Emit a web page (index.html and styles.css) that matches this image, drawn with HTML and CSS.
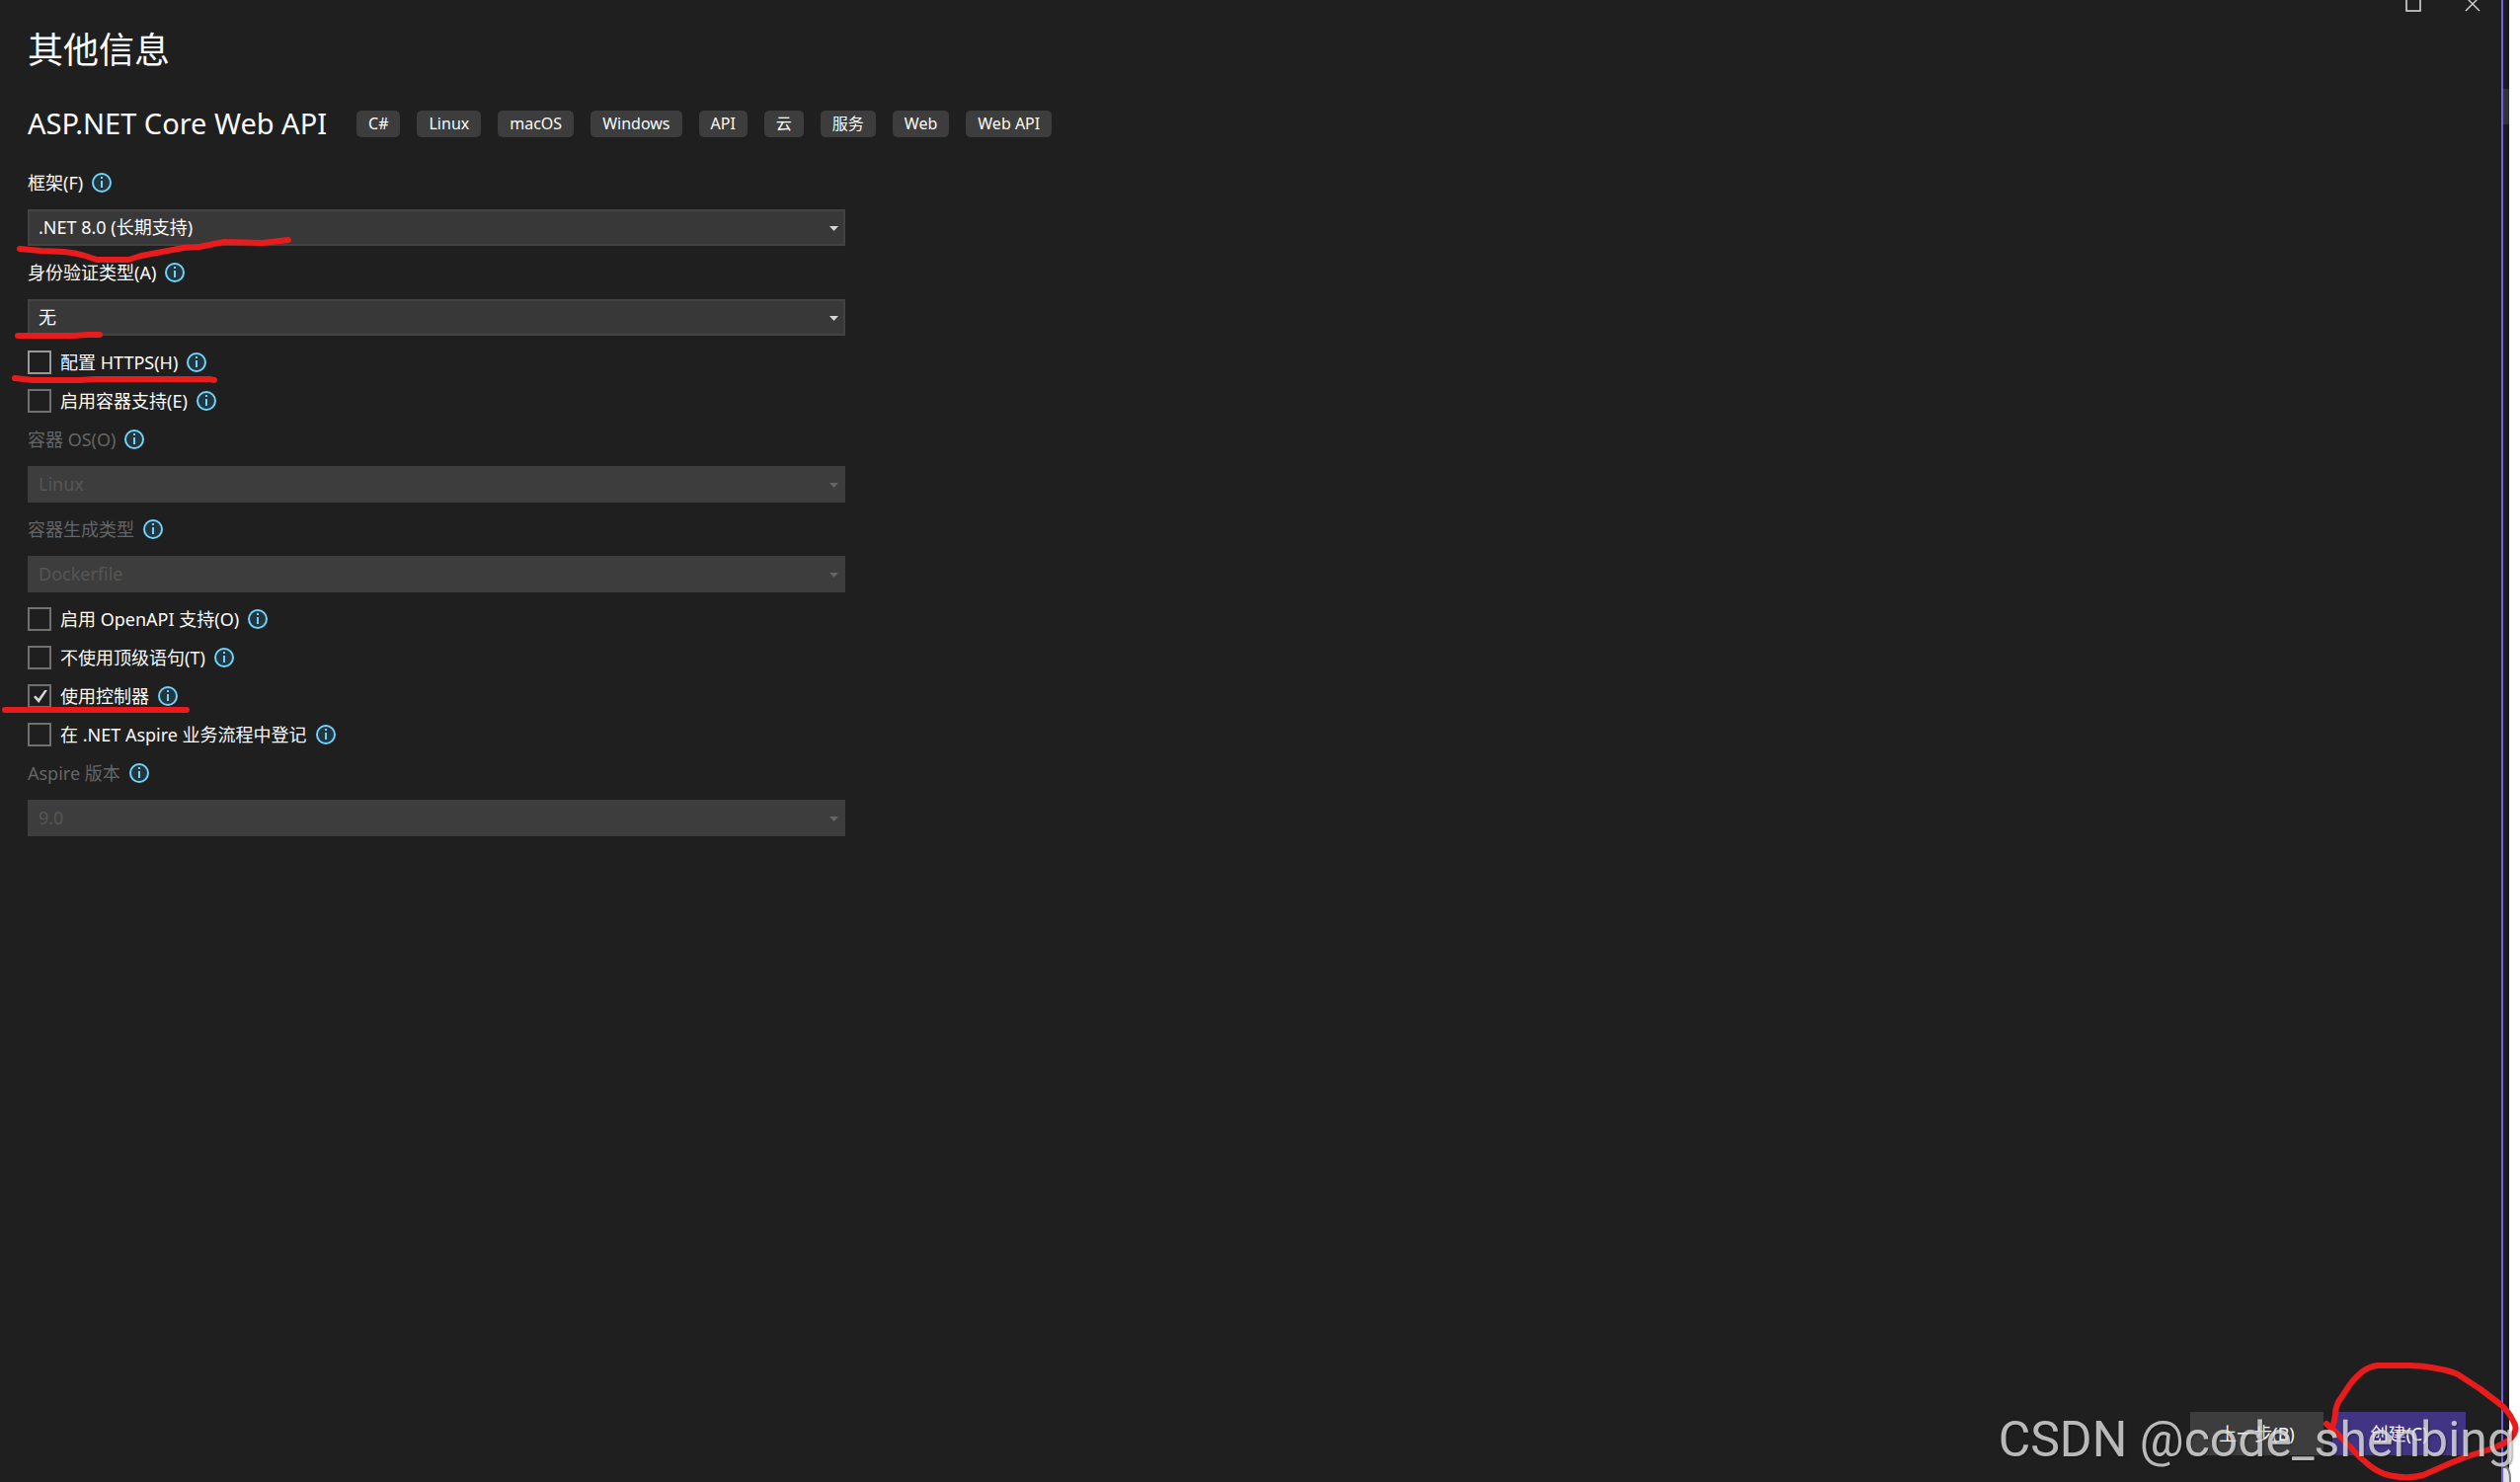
FILE: index.html
```
<!DOCTYPE html>
<html lang="zh-CN">
    <head>
        <meta charset="utf-8">
        <title>其他信息</title>
        <link rel="stylesheet" href="styles.css">
    </head>
    <body>
        <svg class="defs" width="0" height="0">
            <symbol id="info" viewBox="0 0 20 20">
                <circle cx="10" cy="10" r="9" fill="#24363d" stroke="#6fd3fb" stroke-width="2"/>
                <rect x="9" y="4" width="2" height="2" fill="#6fd3fb"/>
                <rect x="9" y="8" width="2" height="7" fill="#6fd3fb"/>
            </symbol>
        </svg>
        <div class="window">
            <div class="window-controls">
                <button aria-label="最大化"><svg width="16" height="16"><rect x="1" y="1" width="14" height="14" stroke-width="1.6"/></svg></button>
                <button aria-label="关闭"><svg width="16" height="16"><path d="M1 1 15 15M15 1 1 15" stroke-width="1.4"/></svg></button>
            </div>
            <main>
                <h1>其他信息</h1>
                <header>
                    <h2>ASP.NET Core Web API</h2>
                    <ul class="tags">
                        <li>C#</li>
                        <li>Linux</li>
                        <li>macOS</li>
                        <li>Windows</li>
                        <li>API</li>
                        <li>云</li>
                        <li>服务</li>
                        <li>Web</li>
                        <li>Web API</li>
                    </ul>
                </header>
                <form>
                    <div class="row">
                        <label for="framework">框架(F)</label>
                        <svg class="info"><use href="#info"/></svg>
                    </div>
                    <div class="select">
                        <select id="framework"><option>.NET 8.0 (长期支持)</option></select>
                    </div>
                    <div class="row">
                        <label for="auth">身份验证类型(A)</label>
                        <svg class="info"><use href="#info"/></svg>
                    </div>
                    <div class="select">
                        <select id="auth"><option>无</option></select>
                    </div>
                    <div class="row">
                        <input type="checkbox" id="https" class="hover">
                        <label for="https">配置 HTTPS(H)</label>
                        <svg class="info"><use href="#info"/></svg>
                    </div>
                    <div class="row">
                        <input type="checkbox" id="container">
                        <label for="container">启用容器支持(E)</label>
                        <svg class="info"><use href="#info"/></svg>
                    </div>
                    <div class="row disabled">
                        <label for="os">容器 OS(O)</label>
                        <svg class="info"><use href="#info"/></svg>
                    </div>
                    <div class="select disabled">
                        <select id="os" disabled><option>Linux</option></select>
                    </div>
                    <div class="row disabled">
                        <label for="build">容器生成类型</label>
                        <svg class="info"><use href="#info"/></svg>
                    </div>
                    <div class="select disabled">
                        <select id="build" disabled><option>Dockerfile</option></select>
                    </div>
                    <div class="row">
                        <input type="checkbox" id="openapi">
                        <label for="openapi">启用 OpenAPI 支持(O)</label>
                        <svg class="info"><use href="#info"/></svg>
                    </div>
                    <div class="row">
                        <input type="checkbox" id="toplevel">
                        <label for="toplevel">不使用顶级语句(T)</label>
                        <svg class="info"><use href="#info"/></svg>
                    </div>
                    <div class="row">
                        <input type="checkbox" id="controllers" checked>
                        <label for="controllers">使用控制器</label>
                        <svg class="info"><use href="#info"/></svg>
                    </div>
                    <div class="row">
                        <input type="checkbox" id="aspire">
                        <label for="aspire">在 .NET Aspire 业务流程中登记</label>
                        <svg class="info"><use href="#info"/></svg>
                    </div>
                    <div class="row disabled">
                        <label for="version">Aspire 版本</label>
                        <svg class="info"><use href="#info"/></svg>
                    </div>
                    <div class="select disabled">
                        <select id="version" disabled><option>9.0</option></select>
                    </div>
                </form>
            </main>
            <footer>
                <button>上一步(B)</button>
                <button class="primary">创建(C)</button>
            </footer>
        </div>
        <div class="backdrop"></div>

        <!-- Red pen marks -->
        <svg class="pen marks" width="320" height="740">
            <path d="M20 252 41 254 65 255Q76 256 86 259L98 263H130L143 259 186 251 202 250 227 245 266 246 292 243"/>
            <path d="M18 340H75L88 339H101"/>
            <path d="M15 383 33 385H80L97 384H212L217 385"/>
            <path d="M5 719H189"/>
        </svg>
        <svg class="pen circle" width="212" height="141" viewBox="2340 1360 212 141">
            <path d="M2356 1442 2366 1451 2389 1475 2398 1483Q2405 1489 2415 1493Q2437 1499 2454 1494L2479 1483 2496 1476 2521 1468Q2533 1464 2540 1459 2551 1450 2546 1441 2541 1430 2533 1423L2512 1407 2489 1392Q2480 1388 2468 1386 2454 1383 2440 1383H2407Q2400 1384 2394 1388 2387 1393 2380 1402L2368 1420Q2365 1426 2365 1433L2363 1443"/>
        </svg>
        <div class="watermark">CSDN @code_shenbing</div>
    </body>
</html>
```

FILE: styles.css
```
* {
    box-sizing: border-box;
}

body {
    display: flex;
    position: relative;
    margin: 0;
    min-height: 100vh;
    overflow: hidden;
    background: #fff;
    color: #fafafa;
    font: 18px/24px "Noto Sans", "Noto Sans CJK SC", sans-serif;
}

h1, h2, ul {
    margin: 0;
    padding: 0;
    font-weight: normal;
}

button, select {
    color: inherit;
    font: inherit;
}

.defs {
    position: absolute;
}

.window {
    display: flex;
    flex-direction: column;
    flex: 1;
    position: relative;
    background: #1f1f1f;
    border-right: 2px solid #7160e8;
}

.window-controls {
    display: flex;
    gap: 44px;
    position: absolute;
    top: -4px;
    right: 21px;
}

    .window-controls button {
        display: flex;
        padding: 0;
        border: 0;
        background: none;
    }

    .window-controls svg {
        fill: none;
        stroke: #d6d6d6;
    }

/* Strip of the desktop between the window edge and the page */
.backdrop {
    position: relative;
    width: 6px;
    margin-right: 11px;
    background: linear-gradient(#1b1b1b 90px, #333 90px, #333 126px, #1b1b1b 126px);
}

.backdrop::after {
    content: "";
    position: absolute;
    bottom: 0;
    width: 6px;
    height: 14px;
    border-top: 3px solid #808080;
    border-right: 2px solid #808080;
    border-top-right-radius: 6px 14px;
    background: #e0e0e0;
}

main {
    flex: 1;
    padding: 27px 28px;
}

h1 {
    font-size: 36px;
    line-height: 48px;
}

header {
    display: flex;
    align-items: center;
    gap: 30px;
    margin: 30px 0 28px;
}

h2 {
    font-size: 29px;
    line-height: 40px;
}

.tags {
    display: flex;
    gap: 17px;
    list-style: none;
}

    .tags li {
        padding: 0 12px;
        border-radius: 5px;
        background: #3d3d3d;
        font-size: 16px;
        line-height: 27px;
    }

form {
    display: flex;
    flex-direction: column;
    gap: 15px;
    width: 828px;
}

.row {
    display: flex;
    align-items: center;
    height: 24px;
}

.row.disabled {
    color: #656565;
}

.info {
    width: 20px;
    height: 20px;
    margin-left: 9px;
}

input {
    appearance: none;
    width: 24px;
    height: 24px;
    margin: 0 9px 0 0;
    border: 2px solid #707070;
}

input.hover {
    border-color: #999;
}

input:checked::before {
    content: "";
    display: block;
    width: 14px;
    height: 13px;
    margin: 4px 0 0 4px;
    background: #d6d6d6;
    clip-path: polygon(0 54%, 14% 42%, 36% 66%, 80% 0, 100% 0, 38% 100%);
}

.select {
    display: grid;
    position: relative;
}

.select::after {
    content: "";
    position: absolute;
    top: 17px;
    right: 7px;
    width: 9px;
    height: 5px;
    background: #d6d6d6;
    clip-path: polygon(0 0, 100% 0, 50% 100%);
}

.select.disabled::after {
    background: #656565;
}

select {
    appearance: none;
    height: 37px;
    padding: 0 9px 2px;
    border: 2px solid #434343;
    border-radius: 0;
    background: #383838;
}

select:disabled {
    border-color: #3d3d3d;
    background: #3d3d3d;
    color: #565656;
    opacity: 1;
}

footer {
    display: flex;
    justify-content: flex-end;
    gap: 9px;
    padding: 0 36px 27px;
}

    footer button {
        width: 135px;
        height: 44px;
        padding: 0;
        border: 0;
        background: #3d3d3d;
    }

    footer .primary {
        background: #413482;
    }

.pen {
    position: absolute;
    fill: none;
    stroke: #e81c1c;
    stroke-width: 6;
    stroke-linecap: round;
    stroke-linejoin: round;
    pointer-events: none;
}

.marks {
    top: 0;
    left: 0;
}

.circle {
    right: 0;
    bottom: 0;
}

.watermark {
    position: absolute;
    right: 5px;
    bottom: 13px;
    color: rgba(240, 240, 240, .75);
    font: 50px/60px Roboto, "Liberation Sans", sans-serif;
    text-shadow: 1px 1px 2px rgba(0, 0, 0, .4);
    pointer-events: none;
}
```
